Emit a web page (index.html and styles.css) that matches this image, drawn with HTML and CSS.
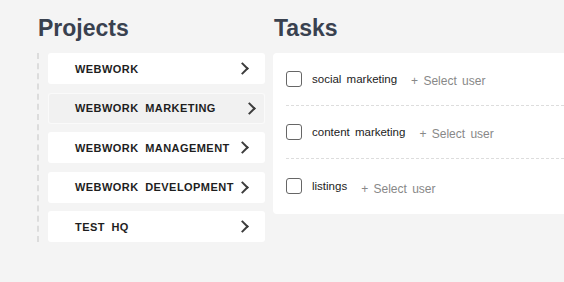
FILE: index.html
```html
<!DOCTYPE html>
<html lang="en">
<head>
    <meta charset="UTF-8">
    <meta name="viewport" content="width=device-width, initial-scale=1.0">
    <title>Projects</title>
    <link rel="stylesheet" href="styles.css">
</head>
<body>

    <div class="board">
        <div class="projects">
            <h2>Projects</h2>
            <ul class="project-list">
                <li class="project">WEBWORK <span class="chev"></span></li>
                <li class="project active">WEBWORK MARKETING <span class="chev"></span></li>
                <li class="project">WEBWORK MANAGEMENT <span class="chev"></span></li>
                <li class="project">WEBWORK DEVELOPMENT <span class="chev"></span></li>
                <li class="project">TEST HQ <span class="chev"></span></li>
            </ul>
        </div>

        <div class="tasks">
            <h2>Tasks</h2>
            <div class="task-panel">
                <div class="task">
                    <span class="box"></span>
                    <span class="name">social marketing</span>
                    <span class="assign">+ Select user</span>
                </div>
                <div class="task">
                    <span class="box"></span>
                    <span class="name">content marketing</span>
                    <span class="assign">+ Select user</span>
                </div>
                <div class="task">
                    <span class="box"></span>
                    <span class="name">listings</span>
                    <span class="assign">+ Select user</span>
                </div>
            </div>
        </div>
    </div>

</body>
</html>
```

FILE: styles.css
```css
/* Basic styling */
body {
    font-family: "Liberation Sans", Arial, sans-serif;
    margin: 0;
    padding: 0;
    background-color: #f4f4f4;
    overflow: hidden;
}

.board {
    display: flex;
    gap: 8px;
    padding: 14px 0 0 38px;
}

h2 {
    margin: 0 0 11px 0;
    font-size: 23px;
    line-height: 28px;
    font-weight: bold;
    color: #39414f;
}

.projects {
    width: 227px;
    flex-shrink: 0;
}

.project-list {
    list-style: none;
    margin: 0;
    padding: 0 0 0 9px;
    border-left: 2px dashed #dcdcdc;
    margin-left: -1px;
    display: flex;
    flex-direction: column;
    gap: 8.5px;
}

.project {
    height: 31px;
    display: flex;
    align-items: center;
    justify-content: space-between;
    padding: 0 16px 0 27px;
    background-color: #fff;
    border-radius: 3px;
    font-size: 11px;
    font-weight: bold;
    letter-spacing: 0.45px;
    word-spacing: 3px;
    color: #1e1e1e;
}

.project.active {
    background-color: #f1f1f1;
    box-shadow: inset 0 0 0 1px #fafafa;
    padding-right: 9px;
}

.chev {
    width: 7px;
    height: 7px;
    border-right: 2px solid #3c3c3c;
    border-top: 2px solid #3c3c3c;
    transform: rotate(45deg);
    margin-right: 2px;
}

.tasks {
    flex: 1;
    min-width: 0;
}

.tasks h2 {
    margin-left: 1px;
}

.task-panel {
    background-color: #fff;
    border-radius: 4px 0 0 4px;
    padding-left: 13px;
}

.task {
    height: 52px;
    display: flex;
    align-items: center;
    border-bottom: 1px dashed #ddd;
    font-size: 11.5px;
    word-spacing: 2px;
}

.task:last-child {
    border-bottom: none;
    height: 55px;
}

.box {
    width: 14px;
    height: 14px;
    border: 1px solid #666;
    border-radius: 3px;
    margin-right: 10px;
    margin-top: -1px;
}

.name {
    color: #222;
    margin-top: -1px;
}

.assign {
    color: #888;
    font-size: 12px;
    margin-left: 14px;
    margin-top: 4px;
}
```
